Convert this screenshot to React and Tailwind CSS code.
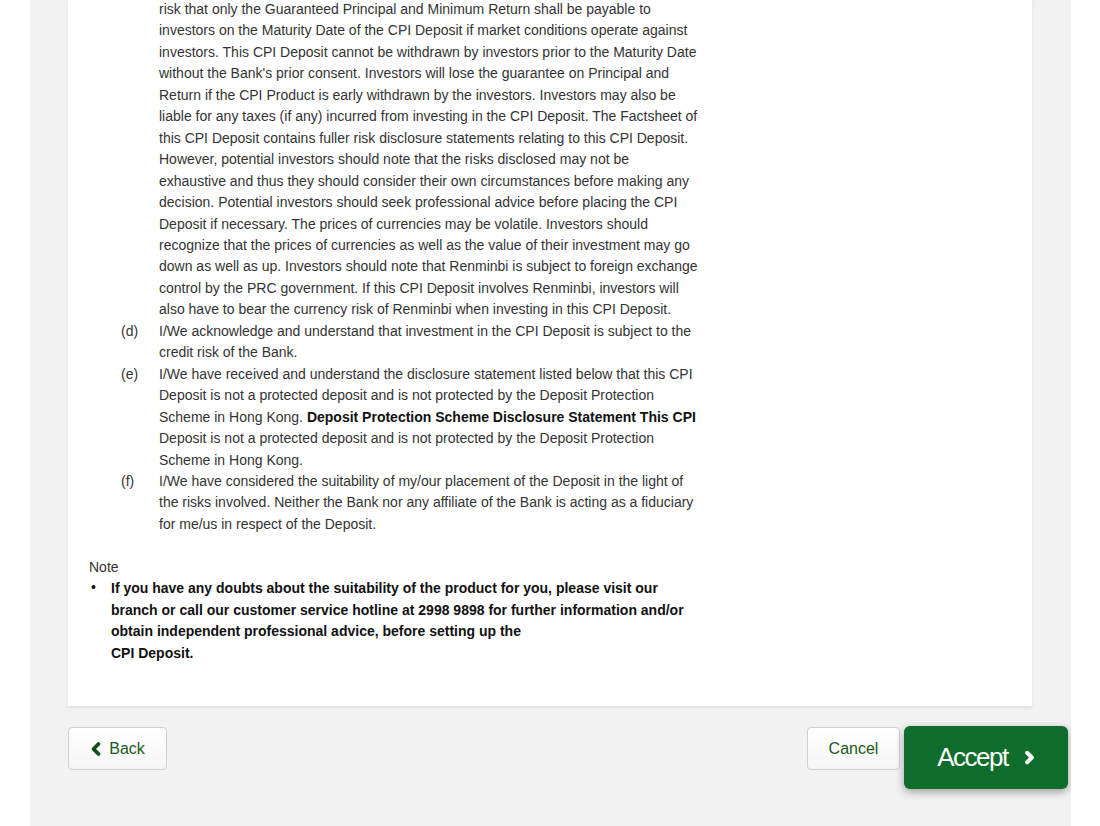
import { ChevronLeft, ChevronRight } from 'lucide-react';

// Final step of the CPI Deposit application: tail of the declarations list, a note,
// and the Back / Cancel / Accept actions below the white card.
const declaracoes = [
  {
    label: '(d)',
    texto: 'I/We acknowledge and understand that investment in the CPI Deposit is subject to the credit risk of the Bank.',
  },
  {
    label: '(e)',
    texto: (
      <>
        I/We have received and understand the disclosure statement listed below that this CPI Deposit is not a
        protected deposit and is not protected by the Deposit Protection Scheme in Hong Kong.{' '}
        <b className="font-bold text-[#111]">Deposit Protection Scheme Disclosure Statement This CPI</b> Deposit is
        not a protected deposit and is not protected by the Deposit Protection Scheme in Hong Kong.
      </>
    ),
  },
  {
    label: '(f)',
    texto:
      'I/We have considered the suitability of my/our placement of the Deposit in the light of the risks involved. Neither the Bank nor any affiliate of the Bank is acting as a fiduciary for me/us in respect of the Deposit.',
  },
];

export default function App() {
  return (
    <div className="min-h-[826px] bg-white font-['Liberation_Sans',Arial,sans-serif] text-[14px] leading-[21.45px] text-[#333]">
      <div className="ml-[30px] w-[1041px] min-h-[826px] bg-[#f2f2f2] pl-[38px] pr-[39px] overflow-hidden">
        <div className="-mt-px bg-white pl-[21px] pb-[42px] shadow-[0_2px_3px_rgba(0,0,0,0.08)]">
          <div className="w-[609px]">
            <p className="pl-[70px]">
              risk that only the Guaranteed Principal and Minimum Return shall be payable to investors on the Maturity
              Date of the CPI Deposit if market conditions operate against investors. This CPI Deposit cannot be
              withdrawn by investors prior to the Maturity Date without the Bank's prior consent. Investors will lose
              the guarantee on Principal and Return if the CPI Product is early withdrawn by the investors. Investors
              may also be liable for any taxes (if any) incurred from investing in the CPI Deposit. The Factsheet of
              this CPI Deposit contains fuller risk disclosure statements relating to this CPI Deposit. However,
              potential investors should note that the risks disclosed may not be exhaustive and thus they should
              consider their own circumstances before making any decision. Potential investors should seek
              professional advice before placing the CPI Deposit if necessary. The prices of currencies may be
              volatile. Investors should recognize that the prices of currencies as well as the value of their
              investment may go down as well as up. Investors should note that Renminbi is subject to foreign exchange
              control by the PRC government. If this CPI Deposit involves Renminbi, investors will also have to bear
              the currency risk of Renminbi when investing in this CPI Deposit.
            </p>
            <ol className="pl-[32px]">
              {declaracoes.map((d) => (
                <li key={d.label} className="grid grid-cols-[38px_1fr]">
                  <span>{d.label}</span>
                  <span>{d.texto}</span>
                </li>
              ))}
            </ol>

            <p className="mt-[21.45px]">Note</p>
            <ul>
              <li className="flex">
                <span className="w-[22px] shrink-0 pl-[2px] text-[#111] leading-[18px]">•</span>
                <span className="font-bold text-[#111]">
                  If you have any doubts about the suitability of the product for you, please visit our branch or call
                  our customer service hotline at 2998 9898 for further information and/or obtain independent
                  professional advice, before setting up the
                  <br />
                  CPI Deposit.
                </span>
              </li>
            </ul>
          </div>
        </div>

        <div className="mt-[20px] -mr-[36px] flex items-start justify-between">
          <button className="mt-px flex h-[43px] w-[99px] items-center justify-center gap-[3px] rounded-[4px] border border-[#cfcfcf] bg-gradient-to-b from-white to-[#f5f5f5] text-[16px] text-[#1d5a22]">
            <ChevronLeft size={20} strokeWidth={4.5} className="text-[#124f18] -ml-1" />
            Back
          </button>
          <div className="flex items-start gap-[4px]">
            <button className="mt-px h-[43px] w-[93px] rounded-[4px] border border-[#cfcfcf] bg-gradient-to-b from-white to-[#f5f5f5] text-[16px] text-[#1d5a22]">
              Cancel
            </button>
            <button className="flex h-[63px] w-[164px] items-center justify-center gap-[12px] rounded-[6px] bg-[#0f6d2c] pl-[4px] text-[26px] tracking-[-1.5px] text-white shadow-[0_3px_8px_rgba(0,0,0,0.35)]">
              Accept
              <ChevronRight size={19} strokeWidth={5} />
            </button>
          </div>
        </div>
      </div>
    </div>
  );
}
